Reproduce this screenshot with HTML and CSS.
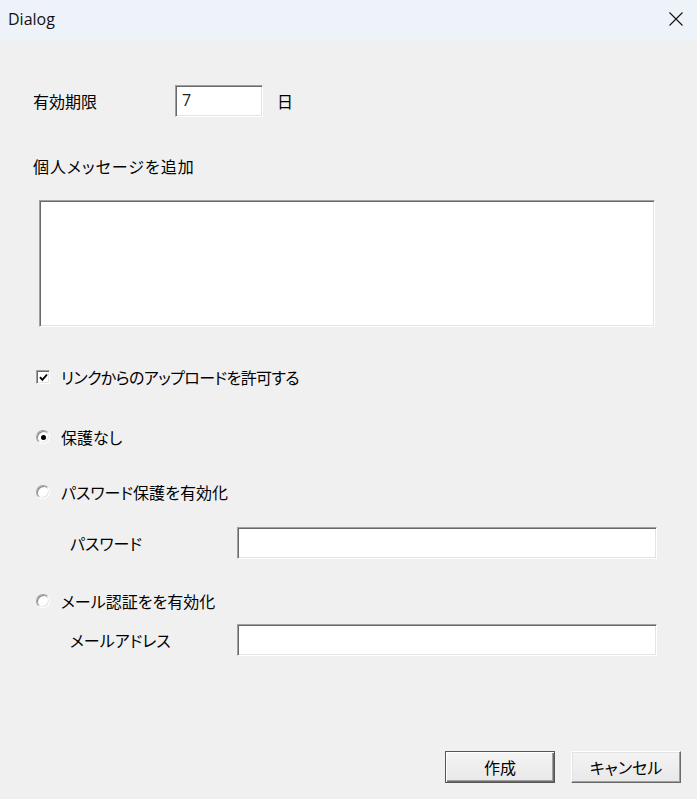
FILE: index.html
```html
<!DOCTYPE html>
<html lang="ja">
<head>
    <meta charset="UTF-8">
    <meta name="viewport" content="width=device-width, initial-scale=1.0">
    <title>Dialog</title>
    <link rel="stylesheet" href="styles.css">
</head>
<body>
<div class="window">
    <div class="titlebar">
        <span class="title">Dialog</span>
        <svg class="close" width="16" height="16" viewBox="0 0 16 16">
            <path d="M1.5 1.5 L14.5 14.5 M14.5 1.5 L1.5 14.5" stroke="#111" stroke-width="1.1" fill="none"/>
        </svg>
    </div>

    <div class="content">
        <div class="row-expire">
            <span class="lbl-expire">有効期限</span>
            <div class="field small">7</div>
            <span class="unit">日</span>
        </div>

        <div class="line msg-label">個人メッセージを追加</div>
        <div class="field memo"></div>

        <div class="line opt check-row">
            <span class="checkbox">
                <svg width="9" height="9" viewBox="0 0 9 9"><path d="M1 4.2 L3.4 6.8 L8 1.5" stroke="#000" stroke-width="1.9" fill="none"/></svg>
            </span>
            <span>リンクからのアップロードを許可する</span>
        </div>

        <div class="line opt radio-1">
            <span class="radio on"></span>
            <span>保護なし</span>
        </div>

        <div class="line opt radio-2">
            <span class="radio"></span>
            <span>パスワード保護を有効化</span>
        </div>
        <div class="sub pw-row">
            <span class="sub-label">パスワード</span>
            <div class="field wide"></div>
        </div>

        <div class="line opt radio-3">
            <span class="radio"></span>
            <span>メール認証をを有効化</span>
        </div>
        <div class="sub mail-row">
            <span class="sub-label">メールアドレス</span>
            <div class="field wide"></div>
        </div>

        <div class="buttons">
            <button class="btn default">作成</button>
            <button class="btn">キャンセル</button>
        </div>
    </div>
</div>
</body>
</html>
```

FILE: styles.css
```css
body {
    margin: 0;
    background: #f0f0f0;
    font-family: "Noto Sans CJK JP", "Noto Sans", sans-serif;
    font-size: 16px;
    color: #000;
}
.window { width: 697px; height: 799px; overflow: hidden; }

.titlebar {
    height: 41px;
    background: #eef3f9;
    display: flex;
    align-items: center;
    justify-content: space-between;
    padding: 0 13px 0 8px;
}
.title { font-family: "Open Sans", "Noto Sans", sans-serif; font-size: 16px; color: #111; margin-top: -4px; }
.close { margin-top: -4px; }

.content { padding-left: 33px; font-feature-settings: "palt"; }

.line { height: 24px; display: flex; align-items: center; }

/* sunken edit boxes */
.field {
    background: #fff;
    box-sizing: border-box;
    border-top: 1px solid #a0a0a0;
    border-left: 1px solid #a0a0a0;
    border-right: 1px solid #fff;
    border-bottom: 1px solid #fff;
    box-shadow: inset 1px 1px #696969, inset -1px -1px #e3e3e3;
}

.row-expire { display: flex; align-items: center; margin-top: 44px; height: 32px; }
.lbl-expire { width: 142px; }
.field.small {
    width: 88px;
    height: 32px;
    padding: 3px 0 0 6px;
    font-family: "Open Sans", sans-serif;
    font-size: 16px;
    line-height: 22px;
    color: #222;
}
.unit { margin-left: 14px; }

.msg-label { margin-top: 37px; letter-spacing: 1px; }
.field.memo { margin: 22px 0 0 6px; width: 616px; height: 127px; }

.opt span + span { margin-left: 11px; }
.check-row { margin-top: 38px; }
.check-row span + span { letter-spacing: -0.6px; }
.radio-1 { margin-top: 36px; }
.radio-2 { margin-top: 31px; }
.radio-3 { margin-top: 30px; }

.checkbox {
    width: 14px;
    height: 14px;
    box-sizing: border-box;
    margin-left: 3px;
    background: #fff;
    border-top: 1px solid #a0a0a0;
    border-left: 1px solid #a0a0a0;
    border-right: 1px solid #fff;
    border-bottom: 1px solid #fff;
    box-shadow: inset 1px 1px #696969, inset -1px -1px #e3e3e3;
    display: flex;
    align-items: center;
    justify-content: center;
}
.opt .checkbox + span { margin-left: 11px; }

.radio {
    width: 14px;
    height: 14px;
    box-sizing: border-box;
    margin-left: 3px;
    border-radius: 50%;
    background: #fff;
    border: 1px solid;
    border-color: #a0a0a0 #fff #fff #a0a0a0;
    box-shadow: inset 1px 1px #8a8a8a, inset -1px -1px #e3e3e3;
    display: flex;
    align-items: center;
    justify-content: center;
}
.radio.on::after {
    content: "";
    width: 5px;
    height: 5px;
    border-radius: 50%;
    background: #000;
}

.sub { display: flex; align-items: center; padding-left: 37px; height: 32px; }
.sub-label { width: 167px; }
.field.wide { width: 420px; height: 32px; }
.pw-row { margin-top: 23px; }
.mail-row { margin-top: 11px; }

.buttons {
    display: flex;
    justify-content: flex-end;
    gap: 16px;
    padding-right: 16px;
    margin-top: 95px;
}
.btn {
    width: 110px;
    height: 32px;
    box-sizing: border-box;
    font-family: "Noto Sans CJK JP", sans-serif;
    font-size: 16px;
    font-feature-settings: "palt";
    color: #000;
    background: linear-gradient(#f4f4f4, #e8e8e8);
    border: 1px solid;
    border-color: #fff #696969 #696969 #fff;
    box-shadow: inset -1px -1px #a0a0a0, inset 1px 1px #e3e3e3;
    padding: 0;
}
.btn.default {
    border: 1px solid #555;
    box-shadow: inset 1px 1px #fff, inset -1px -1px #696969, inset -2px -2px #a0a0a0;
}
```
